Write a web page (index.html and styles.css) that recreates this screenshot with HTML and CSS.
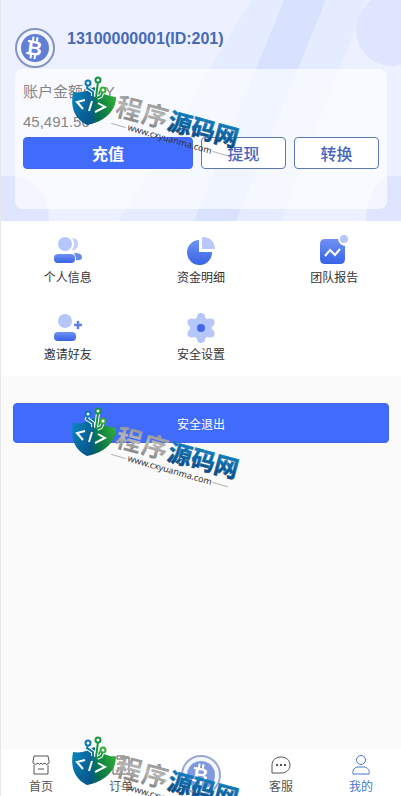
FILE: index.html
```html
<!DOCTYPE html>
<html lang="zh-CN">
<head>
<meta charset="utf-8">
<meta name="viewport" content="width=device-width, initial-scale=1">
<title>我的</title>
<link rel="stylesheet" href="styles.css">
</head>
<body>
<svg class="defs" aria-hidden="true">
  <defs>
    <linearGradient id="blue" x1="0" y1="0" x2="0" y2="1"><stop offset="0" stop-color="#6f92f3"/><stop offset="1" stop-color="#3763e6"/></linearGradient>
    <linearGradient id="shieldFill" x1="0" y1="0" x2="1" y2="0"><stop offset="0" stop-color="#0a84bd"/><stop offset=".42" stop-color="#08639b"/><stop offset=".6" stop-color="#07853f"/><stop offset="1" stop-color="#35b034"/></linearGradient>
    <linearGradient id="shieldDark" x1="0" y1="0" x2="0" y2="1"><stop offset=".3" stop-color="#003c66" stop-opacity="0"/><stop offset="1" stop-color="#003c66" stop-opacity=".4"/></linearGradient>
    <linearGradient id="steel" x1="0" y1="0" x2="0" y2="1"><stop offset="0" stop-color="#777"/><stop offset=".5" stop-color="#b8b8b8"/><stop offset="1" stop-color="#777"/></linearGradient>
    <linearGradient id="ocean" x1="0" y1="0" x2="0" y2="1"><stop offset="0" stop-color="#1590cf"/><stop offset="1" stop-color="#073f78"/></linearGradient>
    <symbol id="coin" viewBox="0 0 40 40">
      <circle cx="20" cy="20" r="19" fill="#f3f6ff" stroke="#8393c4" stroke-width="2"/>
      <circle cx="20" cy="20" r="14" fill="#6080d8"/>
      <g transform="rotate(8 20 20)" fill="#fff">
        <text x="20" y="27" text-anchor="middle" font-family="Liberation Sans, sans-serif" font-weight="700" font-size="20">B</text>
        <path d="M16 9h2v5h-2zM20 9h2v5h-2zM16 26h2v5h-2zM20 26h2v5h-2zM12 13h4v2h-4zM12 25h4v2h-4z"/>
      </g>
    </symbol>
    <symbol id="brand" viewBox="0 0 190 90">
      <path d="M13 22Q24 24 34 17Q43 26 56 27C56 42 43 52 27 55C15 49 10 38 13 22Z" fill="url(#shieldFill)"/>
      <path d="M13 22Q24 24 34 17Q43 26 56 27C56 42 43 52 27 55C15 49 10 38 13 22Z" fill="url(#shieldDark)"/>
      <path d="M28 15L27 18L33 22V26M38 12L36 27M43 21L41 26L37 28" fill="none" stroke="#fff" stroke-width="4"/>
      <g fill="#fff" stroke-width="2">
        <path d="M28 15L27 18L33 22V26" fill="none" stroke="#0878b6"/>
        <path d="M38 12L36 27M43 21L41 26L37 28" fill="none" stroke="#169443"/>
        <circle cx="28" cy="13" r="2.5" stroke="#0878b6"/>
        <circle cx="38" cy="10" r="2.5" stroke="#169443"/>
        <circle cx="43" cy="20" r="2.5" stroke="#35ad3b"/>
      </g>
      <path d="M25 30L17 32L23 39M32 31L29 41M38 33L45 37L35 42" fill="none" stroke="#fff" stroke-width="2"/>
      <g transform="translate(67 39) rotate(15)" class="brand-text">
        <text x="-11" y="9" font-size="26" fill="url(#steel)">程</text>
        <text x="16" y="9" font-size="26" fill="url(#steel)">序</text>
        <text x="43" y="9" font-size="24" fill="url(#ocean)" stroke="url(#ocean)" stroke-width=".6">源码网</text>
      </g>
      <g transform="translate(67 60) rotate(16)">
        <text x="0" y="0" font-family="Noto Sans, sans-serif" font-size="9" fill="#333">www.cxyuanma.com</text>
        <path d="M-17 -2H-2M88 -3H104" stroke="#888" stroke-width=".6"/>
      </g>
    </symbol>
  </defs>
</svg>
<div class="page">
  <header class="profile">
    <svg class="backdrop" viewBox="0 0 400 221" preserveAspectRatio="none" aria-hidden="true">
      <path d="M250 0H400V221H118Z" fill="#e5ecff"/>
      <path d="M283 0H325L235 221H193Z" fill="#d8e2ff"/>
      <path d="M365 0H400V221H280Z" fill="#edf1ff"/>
      <circle cx="391" cy="30" r="36" fill="#dfe4ff"/>
      <path d="M0 176H15Q48 184 48 221H0Z" fill="#dfe5ff"/>
      <path d="M400 176H387Q365 188 365 221H400Z" fill="#dfe5ff"/>
    </svg>
    <div class="user">
      <svg class="coin" aria-hidden="true"><use href="#coin"/></svg>
      <h1>13100000001(ID:201)</h1>
    </div>
    <section class="balance">
      <p>账户金额CNY</p>
      <p>45,491.50</p>
      <div class="actions">
        <button class="primary" type="button">充值</button>
        <button type="button">提现</button>
        <button type="button">转换</button>
      </div>
    </section>
  </header>
  <nav class="menu" aria-label="账户">
    <a href="#info"><svg viewBox="0 0 32 32" aria-hidden="true"><path d="M20 3q6 0 6 6t-6 6q4-6 0-12Z" fill="#c3d0fb"/><path d="M22 18q8 0 8 4t-6 3q0-4-2-7Z" fill="#6688e8"/><circle cx="13" cy="9" r="7" fill="#b5c6fb"/><rect x="2" y="19" width="21" height="9" rx="4" fill="url(#blue)"/></svg><span>个人信息</span></a>
    <a href="#funds"><svg viewBox="0 0 32 32" aria-hidden="true"><path d="M14 5v12h13A12.500 12.500 0 1 1 14 5Z" fill="url(#blue)"/><path d="M17 2q12 0 13 12H17Z" fill="#b9c8fb"/></svg><span>资金明细</span></a>
    <a href="#team"><svg viewBox="0 0 32 32" aria-hidden="true"><path d="M7 4H20q1 6 7 7V24q0 5-5 5H7q-5 0-5-5V9q0-5 5-5Z" fill="url(#blue)"/><circle cx="26" cy="4" r="4" fill="#b5c6fb"/><path d="M7 21l5-6 5 5 5-6" fill="none" stroke="#fff" stroke-width="2"/></svg><span>团队报告</span></a>
    <a href="#invite"><svg viewBox="0 0 32 32" aria-hidden="true"><circle cx="13" cy="9" r="7" fill="#b5c6fb"/><rect x="2" y="20" width="22" height="9" rx="4" fill="url(#blue)"/><path d="M26 9v8M22 13h8" stroke="#5c80e6" stroke-width="2.500"/></svg><span>邀请好友</span></a>
    <a href="#security"><svg viewBox="0 0 32 32" aria-hidden="true"><g fill="#b5c6fb"><circle cx="16" cy="16" r="11"/><circle cx="16" cy="5" r="4"/><circle cx="25.500" cy="10.500" r="4"/><circle cx="25.500" cy="21.500" r="4"/><circle cx="16" cy="27" r="4"/><circle cx="6.500" cy="21.500" r="4"/><circle cx="6.500" cy="10.500" r="4"/></g><circle cx="16" cy="16" r="4" fill="#3f69e7"/></svg><span>安全设置</span></a>
  </nav>
  <main class="content"><button class="logout" type="button">安全退出</button></main>
  <nav class="tabs" aria-label="主导航">
    <a href="#home"><svg viewBox="0 0 20 20" aria-hidden="true"><path d="M3 1H17L18 6V8q-2 3-5 0q-1 3-3 0q-2 3-3 0q-3 3-5 0V6ZM3 10V19H17V10M7 14H13"/></svg><span>首页</span></a>
    <a href="#orders"><svg viewBox="0 0 20 20" aria-hidden="true"><path d="M5 2H2V19H18V2H15M6 1H14V4H6ZM6 9H14M6 13H11"/></svg><span>订单</span></a>
    <a href="#trade" aria-label="交易"><svg class="coin" aria-hidden="true"><use href="#coin"/></svg></a>
    <a href="#service"><svg viewBox="0 0 20 20" aria-hidden="true"><path d="M1 18V10C1 5 5 2 10 2s9 3 9 8-4 8-9 8Z"/><path d="M5 10h2M9 10h2M13 10h2" stroke-width="2"/></svg><span>客服</span></a>
    <a class="active" href="#me" aria-current="page"><svg viewBox="0 0 20 20" aria-hidden="true"><circle cx="10" cy="5" r="4.500"/><path d="M2 19C1 15 4 12 7 12h6c4 0 6 4 5 7Z"/></svg><span>我的</span></a>
  </nav>
  <svg class="mark mark-top" aria-hidden="true"><use href="#brand"/></svg>
  <svg class="mark mark-middle" aria-hidden="true"><use href="#brand"/></svg>
  <svg class="mark mark-bottom" aria-hidden="true"><use href="#brand"/></svg>
</div>
</body>
</html>
```
FILE: styles.css
```css
* { box-sizing: border-box; }
body {
  margin: 0;
  background: #fafafa;
  color: #333;
  font-family: "Liberation Sans", "Noto Sans CJK SC", sans-serif;
  font-size: 12px;
}
a { color: inherit; text-decoration: none; }
button { padding: 0; font-family: inherit; cursor: pointer; }
.defs { position: absolute; width: 0; height: 0; }
.page {
  position: relative;
  display: flex;
  flex-direction: column;
  min-height: 100vh;
  overflow: hidden;
  border-left: 1px solid #e8e8ec;
}
.profile {
  position: relative;
  padding: 28px 14px 12px;
  background: #edf1ff;
}
.backdrop { position: absolute; inset: 0; width: 100%; height: 100%; }
.user { position: relative; display: flex; gap: 12px; height: 41px; }
.coin { width: 40px; height: 40px; flex: none; }
.user h1 { margin: 0; color: #4669b8; font-size: 16px; line-height: 22px; }
.balance {
  position: relative;
  height: 140px;
  padding: 8px;
  border-radius: 8px;
  background: rgba(255, 255, 255, .65);
}
.balance p { margin: 0; height: 30px; color: #858585; font-size: 15px; line-height: 30px; }
.actions { display: grid; grid-template-columns: 2fr 1fr 1fr; gap: 8px; }
.actions button {
  height: 32px;
  border: 1px solid #5b78b5;
  border-radius: 4px;
  background: #fff;
  color: #4966bd;
  font-size: 16px;
  font-weight: 500;
}
.actions .primary { border-color: #4169ee; background: #416bfa; color: #fff; font-weight: 700; }
.menu {
  display: grid;
  grid-template-columns: repeat(3, 1fr);
  padding-bottom: 1px;
  background: #fff;
}
.menu a {
  display: flex;
  flex-direction: column;
  align-items: center;
  height: 77px;
  padding-top: 14px;
  line-height: 22px;
}
.menu svg { width: 32px; height: 32px; }
.content { flex: 1; padding: 27px 12px; }
.logout {
  width: 100%;
  height: 40px;
  border: 1px solid #4167e0;
  border-radius: 4px;
  background: #416bfa;
  color: #fff;
  font-size: 12px;
}
.tabs {
  display: grid;
  grid-template-columns: repeat(5, 1fr);
  height: 47px;
  background: #fff;
}
.tabs a {
  display: flex;
  flex-direction: column;
  align-items: center;
  gap: 1px;
  padding-top: 6px;
  color: #555;
  line-height: 22px;
}
.tabs svg:not(.coin) { width: 20px; height: 20px; fill: none; stroke: currentColor; flex: none; }
.tabs .coin { opacity: .8; }
.tabs .active { color: #4379ce; }
.mark { position: absolute; left: 59px; width: 190px; height: 90px; pointer-events: none; }
.mark-top { top: 70px; }
.mark-middle { top: 401px; }
.mark-bottom { top: 730px; }
.brand-text { font-family: "Noto Sans CJK SC", sans-serif; font-weight: 700; }
```
